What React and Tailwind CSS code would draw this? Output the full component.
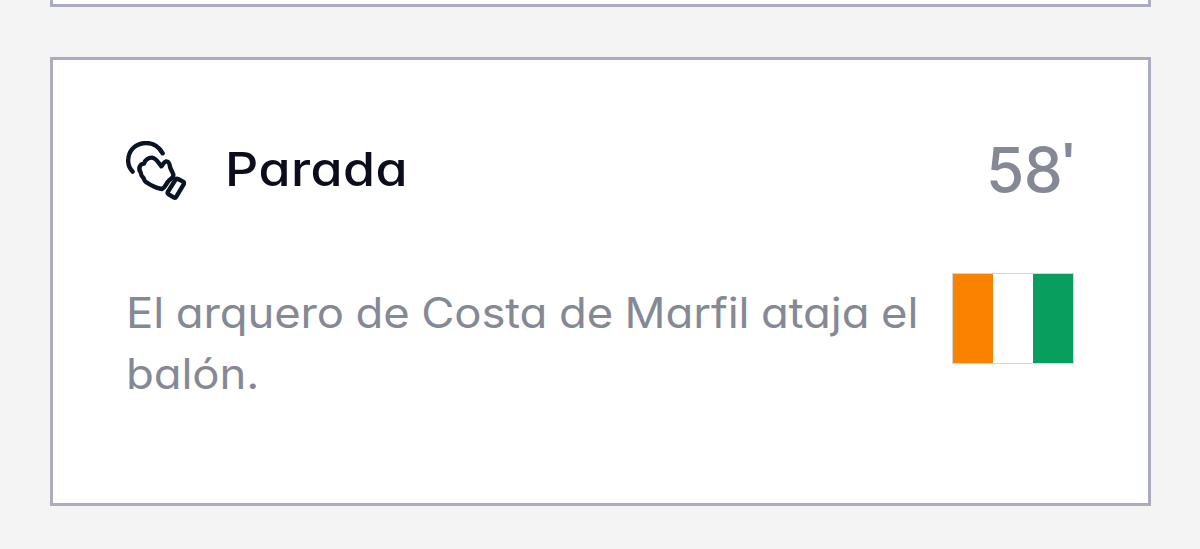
import React from 'react';

const GloveIcon = () => (
  <svg
    className="w-[60px] h-[60px] shrink-0"
    viewBox="30 33 180 180"
    fill="none"
    stroke="#0b1424"
    strokeWidth="13"
    strokeLinecap="round"
    strokeLinejoin="round"
  >
    {/* Ball */}
    <path d="M50 125C39 113 35 99 37 85C40 57 63 39 91 39C112 39 129 50 140 70" />
    {/* Hand */}
    <path d="M84 101C87 89 99 82 109 83C121 85 126 97 136 109C140 106 142 96 150 94C161 93 160 104 163 114C166 123 174 130 172 138C169 146 161 148 156 155C149 164 147 173 138 177C126 175 104 166 90 156C83 152 86 148 81 142C73 136 77 131 73 125C68 118 70 110 74 105C77 101 80 101 84 101Z" />
    {/* Cuff */}
    <path d="M186 147L201 155Q206 158 203 163L181 200Q178 205 173 202L158 193Q153 190 156 185L178 150Q181 145 186 147Z" />
  </svg>
);

const IvoryCoastFlag = () => (
  <div className="flex w-[122px] h-[91px] shrink-0 border border-[#d3d6dd]">
    <div className="flex-1 bg-[#fb8200]"></div>
    <div className="flex-1 bg-white"></div>
    <div className="flex-1 bg-[#089f5e]"></div>
  </div>
);

const EventCard = ({ title, minute, description }) => (
  <article className="h-[449px] shrink-0 bg-white border-[3px] border-[#abacbf] pl-[73px] pr-[74px] pt-[73px]">
    <div className="flex items-center h-[76px]">
      <GloveIcon />
      <h2 className="ml-[39px] mb-[4px] origin-left scale-x-[1.115] text-[46.5px] font-medium leading-[70px] tracking-[0.4px] text-[#0b0c1c]">{title}</h2>
      <div className="ml-auto mb-[3px] flex items-start leading-[76px] font-medium text-[#858995]">
        <span className="text-[62px] tracking-[-0.5px]">{minute}</span>
        <span className="-ml-[2px] -mr-[2px] -mt-[10px] text-[46px] font-bold">'</span>
      </div>
    </div>
    <div className="flex justify-between pt-[64px]">
      <p className="w-[750px] pt-[9px] origin-left scale-x-[1.082] text-[42px] leading-[61px] tracking-[-0.1px] [word-spacing:-1px] text-[#858995]">{description}</p>
      <IvoryCoastFlag />
    </div>
  </article>
);

const App = () => {
  return (
    <main className="h-[549px] overflow-hidden bg-[#f4f4f4] pl-[50px] pr-[49px] font-['Inter',sans-serif] [font-feature-settings:'cv11']">
      {/* Bottom edge of the previous event */}
      <div className="h-[7px] mb-[50px] bg-white border-x-[3px] border-b-[3px] border-[#abacbf]"></div>

      <EventCard
        title="Parada"
        minute="58"
        description="El arquero de Costa de Marfil ataja el balón."
      />
    </main>
  );
};

export default App;
